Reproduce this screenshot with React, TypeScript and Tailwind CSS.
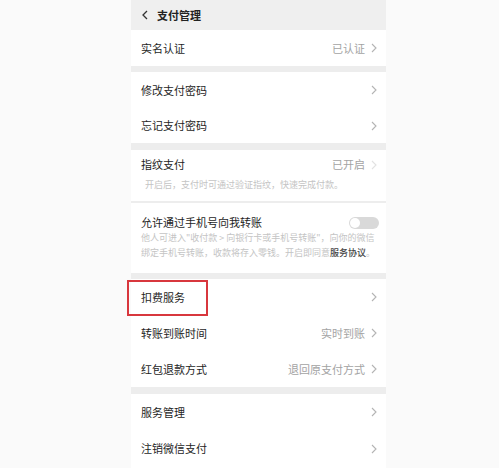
import React from 'react';

const font = { fontFamily: '"Noto Sans CJK SC", "Noto Sans", sans-serif' };

const Chevron = ({ faint }: { faint?: boolean }) => (
    <svg width="6" height="10" viewBox="0 0 6 10" className="shrink-0">
        <path d="M1 1 L5 5 L1 9" fill="none" stroke={faint ? '#e2e2e2' : '#b4b4b4'} strokeWidth="1.1" />
    </svg>
);

const Row = ({ label, value, h = 'h-[36px]' }: { label: string; value?: string; h?: string }) => (
    <div className={`flex items-center justify-between pl-[10px] pr-[9px] ${h}`}>
        <span className="text-[11px] text-[#1e1e1e]">{label}</span>
        <div className="flex items-center gap-[6px]">
            {value && <span className="text-[11px] text-[#a3a3a3]">{value}</span>}
            <Chevron />
        </div>
    </div>
);

export default function App() {
    return (
        <div className="w-[499px] h-[468px] overflow-hidden bg-[#fafafa]" style={font}>
            <div className="ml-[131px] w-[255px] h-full bg-[#ededed] flex flex-col relative">
                {/* Header */}
                <div className="shrink-0 h-[30px] flex items-center pl-[10px] gap-[9px] bg-[#efefef]">
                    <svg width="7" height="10" viewBox="0 0 7 10">
                        <path d="M6 1 L2 5 L6 9" fill="none" stroke="#333" strokeWidth="1.3" />
                    </svg>
                    <span className="text-[11px] font-bold text-[#222]">支付管理</span>
                </div>

                <div className="shrink-0 bg-white">
                    <Row label="实名认证" value="已认证" />
                </div>

                <div className="shrink-0 bg-white mt-[6px]">
                    <Row label="修改支付密码" h="h-[36px]" />
                    <Row label="忘记支付密码" h="h-[35px]" />
                </div>

                {/* 指纹支付 */}
                <div className="shrink-0 bg-white mt-[7px] pt-[7px] pb-[9px] pl-[10px] pr-[9px]">
                    <div className="flex items-center justify-between h-[15px]">
                        <span className="text-[11px] text-[#1e1e1e]">指纹支付</span>
                        <div className="flex items-center gap-[6px]">
                            <span className="text-[11px] text-[#a3a3a3]">已开启</span>
                            <Chevron faint />
                        </div>
                    </div>
                    <p className="mt-[6px] pl-[4px] text-[9px] leading-[14px] text-[#c4c4c4]">
                        开启后，支付时可通过验证指纹，快速完成付款。
                    </p>
                </div>

                {/* 手机号转账 */}
                <div className="shrink-0 bg-white mt-[2px] pt-[12px] pb-[13px] pl-[10px] pr-[7px]">
                    <div className="flex items-center justify-between h-[15px]">
                        <span className="text-[11px] text-[#1e1e1e]">允许通过手机号向我转账</span>
                        <div className="w-[30px] h-[12px] rounded-full bg-[#d9d9d9] p-[1px] flex items-center">
                            <div className="w-[10px] h-[10px] rounded-full bg-white" />
                        </div>
                    </div>
                    <p className="text-[9px] leading-[15px] text-[#c4c4c4] whitespace-nowrap">
                        他人可进入"收付款 &gt; 向银行卡或手机号转账"，向你的微信
                        <br />
                        绑定手机号转账，收款将存入零钱。开启即同意
                        <span className="text-[#444] font-medium">服务协议</span>。
                    </p>
                </div>

                <div className="shrink-0 bg-white mt-[6px]">
                    <Row label="扣费服务" />
                    <Row label="转账到账时间" value="实时到账" />
                    <Row label="红包退款方式" value="退回原支付方式" />
                </div>

                <div className="bg-white mt-[7px] flex-1">
                    <Row label="服务管理" />
                    <Row label="注销微信支付" h="h-[37px]" />
                </div>

                {/* highlight box */}
                <div className="absolute left-[-4px] top-[280px] w-[81px] h-[36px] border-2 border-[#d8373d]" />
            </div>
        </div>
    );
}
